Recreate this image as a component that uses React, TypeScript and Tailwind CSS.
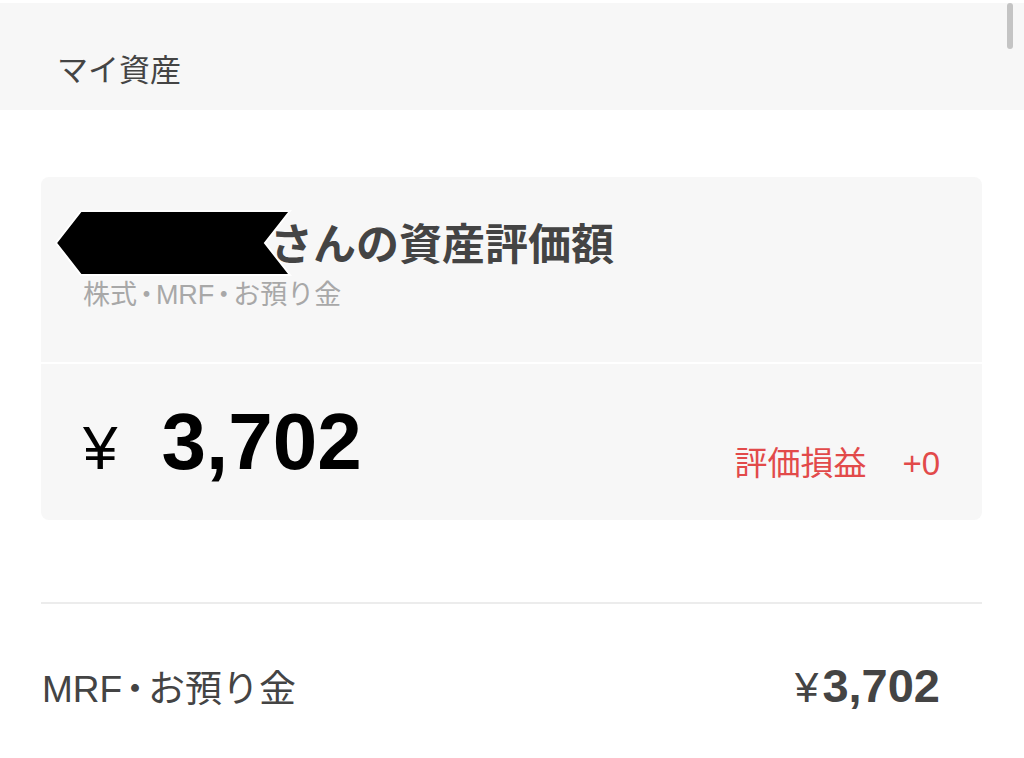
import React from 'react';

const FONT = { fontFamily: '"Liberation Sans", "Noto Sans CJK JP", sans-serif' };

function Dot() {
  // half-width middle dot with a little air, closer to the screenshot's spacing
  return <span className="px-[0.1em] [font-feature-settings:'halt']">・</span>;
}

function Redaction() {
  // black name mask with a thin white edge, as in the screenshot
  return (
    <svg width="238" height="66" viewBox="0 0 238 66" className="shrink-0">
      <polygon
        points="2,33 27,1 236,1 211,33 236,65 27,65"
        fill="#000"
        stroke="#fff"
        strokeWidth="2"
      />
    </svg>
  );
}

export default function App() {
  return (
    <div className="relative h-[758px] w-full overflow-hidden bg-white" style={FONT}>
      <div className="absolute right-[11px] top-[3px] h-[46px] w-[6px] rounded-full bg-[#c4c4c4]" />

      <div className="mt-[3px] h-[107px] bg-[#f7f7f7] pl-[57px] pt-[49px]">
        <h1 className="text-[31px] font-normal leading-[38px] text-[#444]">マイ資産</h1>
      </div>

      <div className="mx-[42px] mt-[67px] ml-[41px] overflow-hidden rounded-[8px] bg-[#f7f7f7]">
        <div className="h-[185px] pl-[13px] pt-[33px]">
          <div className="flex items-center">
            <Redaction />
            <span className="-ml-[22px] mt-[4px] text-[43px] font-bold leading-[52px] text-[#444]">
              さんの資産評価額
            </span>
          </div>
          <div className="mt-[4px] pl-[29px] text-[27px] leading-[30px] text-[#a8a8a8]">
            株式<Dot />MRF<Dot />お預り金
          </div>
        </div>
        <div className="h-[2px] bg-white" />
        <div className="flex h-[156px] items-start justify-between pl-[42px] pr-[42px] pt-[38px]">
          <div className="flex items-baseline">
            <span className="text-[62px] font-normal leading-none text-black">¥</span>
            <span className="ml-[44px] text-[80px] font-bold leading-none text-black">
              3,702
            </span>
          </div>
          <div className="mt-[45px] flex items-baseline text-[33px] leading-none text-[#e24a4a]">
            <span>評価損益</span>
            <span className="ml-[36px]">+0</span>
          </div>
        </div>
      </div>

      <div className="mx-[42px] ml-[41px] mt-[82px] h-[2px] bg-[#ececec]" />

      <div className="flex items-baseline justify-between pl-[42px] pr-[84px] pt-[58px]">
        <span className="text-[37px] leading-none text-[#444]">
          MRF<Dot />お預り金
        </span>
        <span className="flex items-baseline text-[#444]">
          <span className="text-[42px] leading-none">¥</span>
          <span className="ml-[4px] text-[47px] font-bold leading-none">3,702</span>
        </span>
      </div>
    </div>
  );
}
